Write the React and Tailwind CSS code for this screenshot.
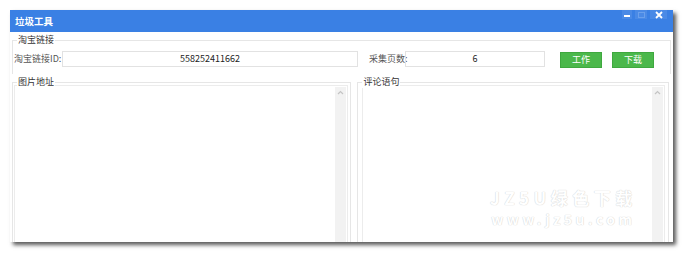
import React from "react";

const font = { fontFamily: '"Noto Sans CJK SC", "Liberation Sans", sans-serif' };

function Scrollbar() {
  return (
    <div className="w-[11px] h-full bg-[#f2f2f2] flex flex-col items-center pt-[3px]">
      <svg width="7" height="5" viewBox="0 0 7 5">
        <path d="M1 4 L3.5 1.5 L6 4" fill="none" stroke="#c4c4c4" strokeWidth="1.2" />
      </svg>
    </div>
  );
}

function Group({ label, className, inner }) {
  return (
    <div className={"relative border border-[#e6e6e6] border-b-0 " + className}>
      <span className="absolute left-[4px] top-[-7px] bg-white px-[1px] text-[9px] leading-[12px] text-[#333] whitespace-nowrap">
        {label}
      </span>
      {inner}
    </div>
  );
}

export default function App() {
  return (
    <div className="w-[685px] h-[253px] bg-white pt-[10px] pl-[10px] overflow-hidden" style={font}>
      <div className="relative w-[663px] h-[232px] bg-white flex flex-col shadow-[3px_3px_4px_rgba(0,0,0,0.65)]">
        {/* title bar */}
        <div className="h-[22px] bg-[#3a80e4] flex items-start justify-between pl-[5px] pr-[6px]">
          <span className="text-white text-[9.5px] leading-[22px] font-bold">垃圾工具</span>
          <div className="flex gap-[3px]">
            <div className="w-[10px] h-[9px] bg-[#4a8ae6] flex items-end justify-center pb-[2px]">
              <div className="w-[6px] h-[2px] bg-white" />
            </div>
            <div className="w-[12px] h-[9px] bg-[#4a8ae6] flex items-center justify-center">
              <div className="w-[7px] h-[6px] border border-[#6aa0ec]" />
            </div>
            <div className="w-[17px] h-[9px] bg-[#4a8ae6] flex items-center justify-center">
              <svg width="8" height="8" viewBox="0 0 8 8">
                <path d="M1 1 L7 7 M7 1 L1 7" stroke="white" strokeWidth="1.8" />
              </svg>
            </div>
          </div>
        </div>

        {/* group 1 */}
        <div className="px-[2px] pt-[8px]">
          <Group
            label="淘宝链接"
            className="h-[34px] border-b"
            inner={
              <div className="flex items-center h-full pl-[1px] pt-[3px]">
                <span className="text-[9px] text-[#555] w-[48px] whitespace-nowrap">淘宝链接ID:</span>
                <div className="w-[296px] h-[16px] border border-[#e2e2e2] flex items-center justify-center text-[9px] text-[#222]">
                  558252411662
                </div>
                <span className="ml-[11px] text-[9px] text-[#555] w-[36px] whitespace-nowrap">采集页数:</span>
                <div className="w-[140px] h-[16px] border border-[#e2e2e2] flex items-center justify-center text-[9px] text-[#222] -mt-[1px]">
                  6
                </div>
                <button className="ml-[15px] w-[42px] h-[16px] bg-[#4bb84b] border border-[#3fa83f] text-white text-[9px] leading-[14px] mt-[2px]">
                  工作
                </button>
                <button className="ml-[10px] w-[42px] h-[16px] bg-[#4bb84b] border border-[#3fa83f] text-white text-[9px] leading-[14px] mt-[2px]">
                  下载
                </button>
              </div>
            }
          />
        </div>

        {/* group 2 */}
        <div className="flex flex-1 pl-[2px] pr-[4px] pt-[8px] gap-[6px]">
          <Group
            label="图片地址"
            className="w-[340px] h-full pl-[1px] pr-[2px] pt-[2px]"
            inner={
              <div className="h-full border border-[#ececec] border-b-0 flex justify-end pr-[1px] pt-[1px]">
                <Scrollbar />
              </div>
            }
          />
          <Group
            label="评论语句"
            className="w-[312px] h-full pl-[4px] pr-[3px] pt-[2px]"
            inner={
              <div className="h-full border border-[#ececec] border-b-0 flex justify-end pr-[1px] pt-[1px]">
                <Scrollbar />
              </div>
            }
          />
        </div>

        {/* watermark */}
        <div className="absolute left-[480px] top-[179px] flex flex-col items-center gap-[6px] text-white font-bold [text-shadow:0_0_1px_#d4d4d4,0_0_1px_#d4d4d4]">
          <span className="text-[17px] leading-[17px] tracking-[4.5px]">JZ5U绿色下载</span>
          <span className="text-[14px] leading-[14px] tracking-[3.5px]">www.jz5u.com</span>
        </div>
      </div>
    </div>
  );
}
